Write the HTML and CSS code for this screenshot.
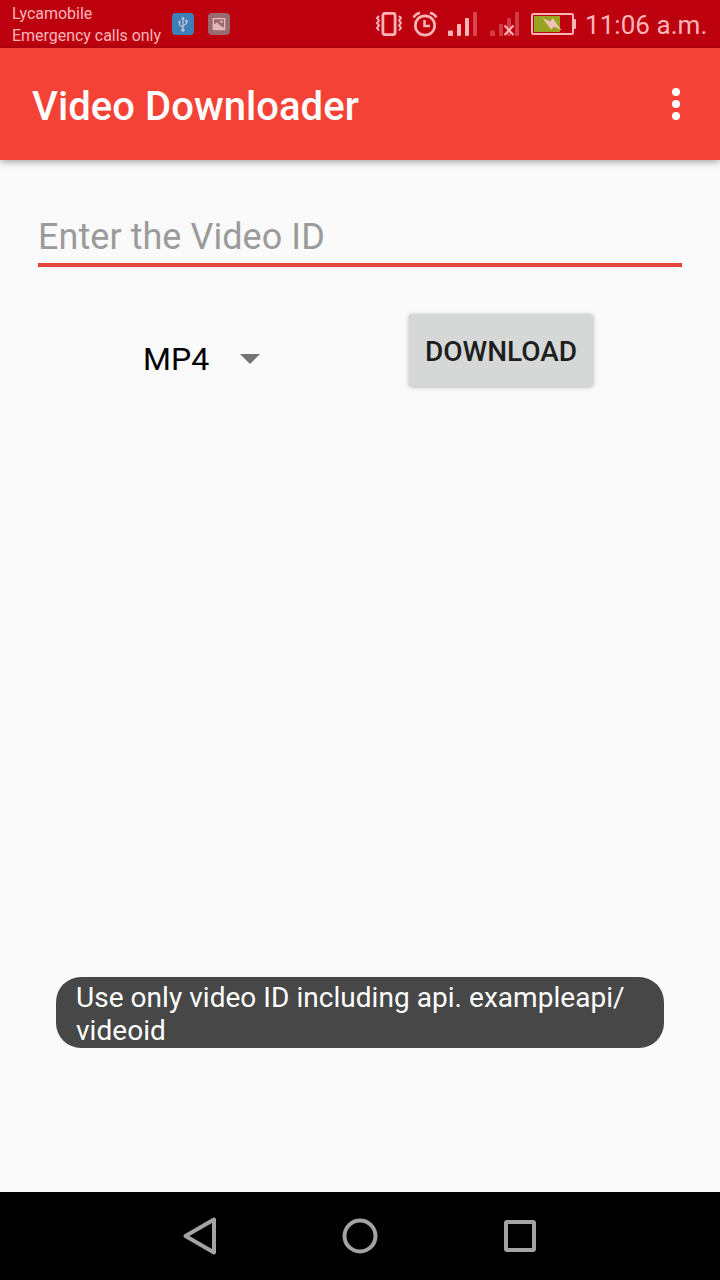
FILE: index.html
```html
<!DOCTYPE html>
<html lang="en">
<head>
<meta charset="utf-8">
<title>Video Downloader</title>
<link rel="stylesheet" href="styles.css">
</head>
<body>
<div class="screen">
  <div class="status-bar">
    <div class="carrier"><span>Lycamobile</span><span>Emergency calls only</span></div>
    <div class="notifications">
      <svg width="22" height="22" viewBox="0 0 22 22"><rect width="22" height="22" rx="4" fill="#3d80b9"/><g fill="none" stroke="#c5bfd4" stroke-width="1.2"><path d="M11 5v12M11 14.5L7.5 12V9M11 13l3.500-2.500V8"/></g><g fill="#c5bfd4"><path d="M11 3.500l2 3H9z"/><circle cx="11" cy="17" r="1.700"/><circle cx="7.500" cy="9" r="1.200"/><rect x="13.300" y="7" width="2.400" height="2.400"/></g></svg>
      <svg width="22" height="22" viewBox="0 0 22 22"><rect width="22" height="22" rx="4" fill="#98696f"/><rect x="5.300" y="5.600" width="11.400" height="11" fill="none" stroke="#e3b6bb" stroke-width="1.400"/><path d="M5 17v-5l4-2.500 4 3.500 4 2v2z" fill="#e3b6bb"/><circle cx="13.500" cy="8.800" r="1.300" fill="#e3b6bb"/></svg>
    </div>
    <div class="system">
      <svg class="vibrate" width="27" height="26" viewBox="0 0 27 26" fill="none" stroke="#ffb5b8"><rect x="7.900" y="2.400" width="12.200" height="21.200" rx="2" stroke-width="2.800"/><path d="M4 5L2 7l2 2.500-2 2.500 2 2.500-2 2.500 2 2.500M24 5l2 2-2 2.500 2 2.500-2 2.500 2 2.500-2 2.500" stroke-width="2"/></svg>
      <svg class="alarm" width="26" height="26" viewBox="0 0 26 26" fill="none" stroke="#ffb5b8" stroke-width="2.700"><circle cx="13" cy="14.500" r="9.700"/><path d="M12.500 9v6H18M1.500 6.500Q3.500 3 8 1.800M24.500 6.500Q22.500 3 18 1.800" stroke-width="2.500"/></svg>
      <svg class="signal" width="30" height="26" viewBox="0 0 30 26" fill="#ffb5b8"><rect y="18.500" width="5" height="5.500" rx="1"/><rect x="9" y="12" width="4" height="12" rx="1"/><rect x="17" y="6" width="4" height="18" rx="1"/><rect x="25" width="4" height="24" rx="1" fill="#da454f"/></svg>
      <svg class="no-signal" width="30" height="26" viewBox="0 0 30 26" fill="#d33c47"><rect y="18.500" width="5" height="5.500" rx="1"/><rect x="9" y="12" width="4" height="12" rx="1"/><rect x="17" y="6" width="4" height="18" rx="1"/><rect x="25" width="4" height="24" rx="1"/><path d="M14.500 13.500l9 9.500M23.500 13.500l-9 9.500" stroke="#ffb5b8" stroke-width="2"/></svg>
      <svg class="battery" width="45" height="22" viewBox="0 0 45 22"><rect x="1" y="1" width="41" height="20" rx="1.500" fill="none" stroke="#ffb5b8" stroke-width="2"/><rect x="3" y="3" width="26" height="16" fill="#98a321"/><path d="M42 6h2q1 0 1 1v8q0 1-1 1h-2z" fill="#ffb5b8"/><path d="M11.500 5l7.500 3.500 3-3.500 4 6.500 5 6-8-4-3 3z" fill="#f0c4b4"/></svg>
      <span class="clock">11:06 a.m.</span>
    </div>
  </div>
  <header class="app-bar">
    <h1>Video Downloader</h1>
    <svg width="8" height="32" viewBox="0 0 8 32" fill="#fff"><circle cx="4" cy="4" r="4"/><circle cx="4" cy="16" r="4"/><circle cx="4" cy="28" r="4"/></svg>
  </header>
  <main>
    <div class="field">Enter the Video ID</div>
    <div class="controls">
      <div class="format"><span>MP4</span><svg width="20" height="10" viewBox="0 0 20 10"><path d="M0 0h20L10 10z" fill="#737373"/></svg></div>
      <button class="download">DOWNLOAD</button>
    </div>
    <div class="toast">Use only video ID including api. exampleapi/<br>videoid</div>
  </main>
  <nav class="nav-bar">
    <svg width="40" height="40" viewBox="0 0 40 40"><path d="M34 3.500v33L5.500 20z"/></svg>
    <svg width="40" height="40" viewBox="0 0 40 40"><circle cx="20" cy="20" r="15.500"/></svg>
    <svg width="40" height="40" viewBox="0 0 40 40"><rect x="6" y="6" width="28" height="28" rx="1"/></svg>
  </nav>
</div>
</body>
</html>
```

FILE: styles.css
```css
* { box-sizing: border-box; }
body { margin: 0; font-family: Roboto, sans-serif; background: #fafafa; }
svg { display: block; flex: none; }
.screen { width: 720px; height: 1280px; display: flex; flex-direction: column; overflow: hidden; }
.status-bar { height: 48px; flex: none; display: flex; background: #bd000e; color: #ffb5b8; white-space: nowrap; }
.carrier { width: 160px; padding: 3px 0 0 12px; display: flex; flex-direction: column; font-size: 16px; line-height: 22px; letter-spacing: -.03px; }
.notifications { display: flex; gap: 14px; padding: 13px 0 0 12px; }
.system { display: flex; align-items: flex-start; margin-left: 145px; }
.vibrate { margin-top: 11px; }
.alarm { margin: 11px 0 0 10px; }
.signal { margin: 12px 0 0 10px; }
.no-signal { margin: 12px 0 0 12px; }
.battery { margin: 13px 0 0 11px; }
.clock { margin-left: 9px; font-size: 26px; line-height: 50px; letter-spacing: .05px; }
.app-bar { height: 112px; flex: none; display: flex; align-items: center; justify-content: space-between; padding: 0 40px 0 32px; background: #f44336; color: #fff; box-shadow: 0 2px 7px rgba(0, 0, 0, .35); }
.app-bar h1 { margin: 6px 0 0; font-size: 40px; line-height: 48px; font-weight: 500; letter-spacing: .06px; }
main { flex: 1; display: flex; flex-direction: column; padding: 53px 38px 0; }
.field { height: 54px; border-bottom: 4px solid #e3483d; font-size: 36px; line-height: 48px; letter-spacing: .05px; color: #9b9b9b; }
.controls { display: flex; justify-content: space-between; padding: 47px 89px 0 105px; }
.format { display: flex; align-items: center; gap: 31px; height: 90px; font-size: 32px; color: #000; }
.download { width: 184px; height: 72px; border: 0; border-radius: 3px; padding: 2px 0 0; background: #d6d7d7; color: #1d1f1f; font: 500 28px Roboto, sans-serif; box-shadow: 0 1px 4px rgba(0, 0, 0, .3); }
.toast { margin: auto 18px 144px; height: 71px; padding: 4px 20px; border-radius: 25px; background: #474747; color: #fff; font-size: 28px; line-height: 33px; letter-spacing: .04px; white-space: nowrap; }
.nav-bar { height: 88px; flex: none; display: flex; align-items: center; justify-content: center; gap: 120px; background: #000; }
.nav-bar svg { fill: none; stroke: #a3a3a3; stroke-width: 4; stroke-linejoin: round; }
```
